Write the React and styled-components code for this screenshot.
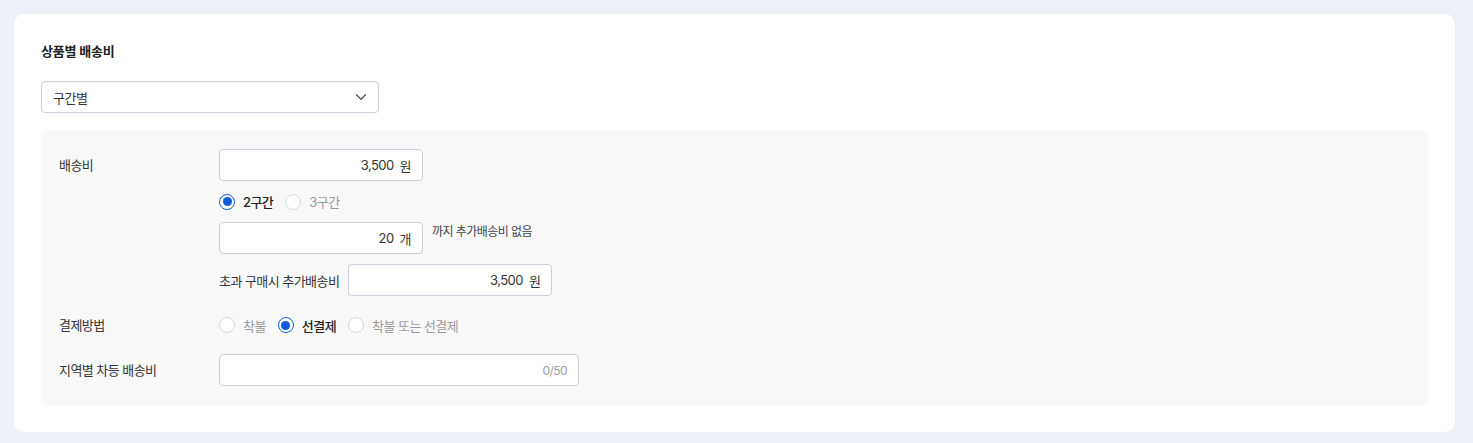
import React, { useState } from "react";
import styled, { createGlobalStyle } from "styled-components";

const GlobalStyle = createGlobalStyle`
  * { box-sizing: border-box; }
  body {
    margin: 0;
    background: #edf0f7;
    font-family: Inter, "Noto Sans CJK KR", sans-serif;
    color: #333;
  }
`;

const Page = styled.div`
  padding: 14px 18px 11px 14px;
`;

const Card = styled.section`
  background: #fff;
  border-radius: 10px;
  padding: 27px;
`;

const Title = styled.h2`
  margin: 0;
  font-size: 13px;
  font-weight: 700;
  line-height: 20px;
  color: #222;
  letter-spacing: -0.2px;
`;

const SelectBox = styled.button`
  margin-top: 20px;
  width: 338px;
  height: 32px;
  display: flex;
  align-items: center;
  justify-content: space-between;
  padding: 0 11px;
  background: #fff;
  border: 1px solid #c8d0e0;
  border-radius: 4px;
  font: inherit;
  font-size: 13px;
  letter-spacing: -0.4px;
  color: #333;
  cursor: pointer;
`;

const Panel = styled.div`
  margin-top: 18px;
  background: #f9f9fa;
  border-radius: 6px;
  padding: 18px 18px 19px;
  display: flex;
  flex-direction: column;
  gap: 18px;
  letter-spacing: -0.55px;
`;

const Row = styled.div`
  display: grid;
  grid-template-columns: 160px 1fr;
  align-items: start;
`;

const Label = styled.div`
  font-size: 13px;
  line-height: ${(p) => p.$lh || 32}px;
  color: #333;
`;

const Stack = styled.div`
  display: flex;
  flex-direction: column;
  gap: 10px;
`;

const Line = styled.div`
  display: flex;
  align-items: ${(p) => p.$align || "center"};
  gap: 9px;
`;

const InputBox = styled.div`
  width: ${(p) => p.$w || 204}px;
  height: 32px;
  display: flex;
  align-items: center;
  justify-content: flex-end;
  gap: 6px;
  padding: 0 11px;
  background: #fff;
  border: 1px solid #c8d0e0;
  border-radius: 4px;
  font-size: ${(p) => (p.$small ? 12 : 13)}px;
  color: ${(p) => (p.$muted ? "#a0a0a0" : "#333")};
`;

const Note = styled.span`
  font-size: 12px;
  line-height: 20px;
  color: #444;
`;

const Text = styled.span`
  font-size: 13px;
  color: #333;
`;

const RadioGroup = styled.div`
  display: flex;
  align-items: center;
  gap: 12px;
  height: ${(p) => p.$h || 21}px;
`;

const RadioItem = styled.label`
  display: flex;
  align-items: center;
  gap: 8px;
  font-size: 13px;
  font-weight: ${(p) => (p.$on ? 500 : 400)};
  color: ${(p) => (p.$on ? "#222" : "#999")};
  cursor: pointer;
`;

const Circle = styled.span`
  width: 16px;
  height: 16px;
  border-radius: 50%;
  background: #fff;
  border: ${(p) => (p.$on ? "1.5px solid #0b5bd8" : "1px solid #d3d9e4")};
  display: flex;
  align-items: center;
  justify-content: center;
  &::after {
    content: "";
    width: 9px;
    height: 9px;
    border-radius: 50%;
    background: ${(p) => (p.$on ? "#0b5bd8" : "transparent")};
  }
`;

const Radio = ({ options, value, onChange, h }) => (
  <RadioGroup $h={h}>
    {options.map((o) => (
      <RadioItem key={o} $on={o === value} onClick={() => onChange(o)}>
        <Circle $on={o === value} />
        {o}
      </RadioItem>
    ))}
  </RadioGroup>
);

const Chevron = () => (
  <svg width="12" height="8" viewBox="0 0 12 8" fill="none">
    <path d="M1.5 1.8 6 6.2l4.5-4.4" stroke="#555" strokeWidth="1.3" strokeLinecap="round" strokeLinejoin="round" />
  </svg>
);

export default function App() {
  const [tier, setTier] = useState("2구간");
  const [pay, setPay] = useState("선결제");
  return (
    <Page>
      <GlobalStyle />
      <Card>
        <Title>상품별 배송비</Title>
        <SelectBox>
          <span>구간별</span>
          <Chevron />
        </SelectBox>
        <Panel>
          <Row>
            <Label>배송비</Label>
            <Stack>
              <InputBox>
                <span>3,500</span>
                <span>원</span>
              </InputBox>
              <Radio options={["2구간", "3구간"]} value={tier} onChange={setTier} />
              <Line $align="flex-start">
                <InputBox>
                  <span>20</span>
                  <span>개</span>
                </InputBox>
                <Note>까지 추가배송비 없음</Note>
              </Line>
              <Line>
                <Text>초과 구매시 추가배송비</Text>
                <InputBox>
                  <span>3,500</span>
                  <span>원</span>
                </InputBox>
              </Line>
            </Stack>
          </Row>
          <Row>
            <Label $lh={22}>결제방법</Label>
            <Radio options={["착불", "선결제", "착불 또는 선결제"]} value={pay} onChange={setPay} h={22} />
          </Row>
          <Row>
            <Label>지역별 차등 배송비</Label>
            <InputBox $w={360} $small $muted>
              0/50
            </InputBox>
          </Row>
        </Panel>
      </Card>
    </Page>
  );
}
